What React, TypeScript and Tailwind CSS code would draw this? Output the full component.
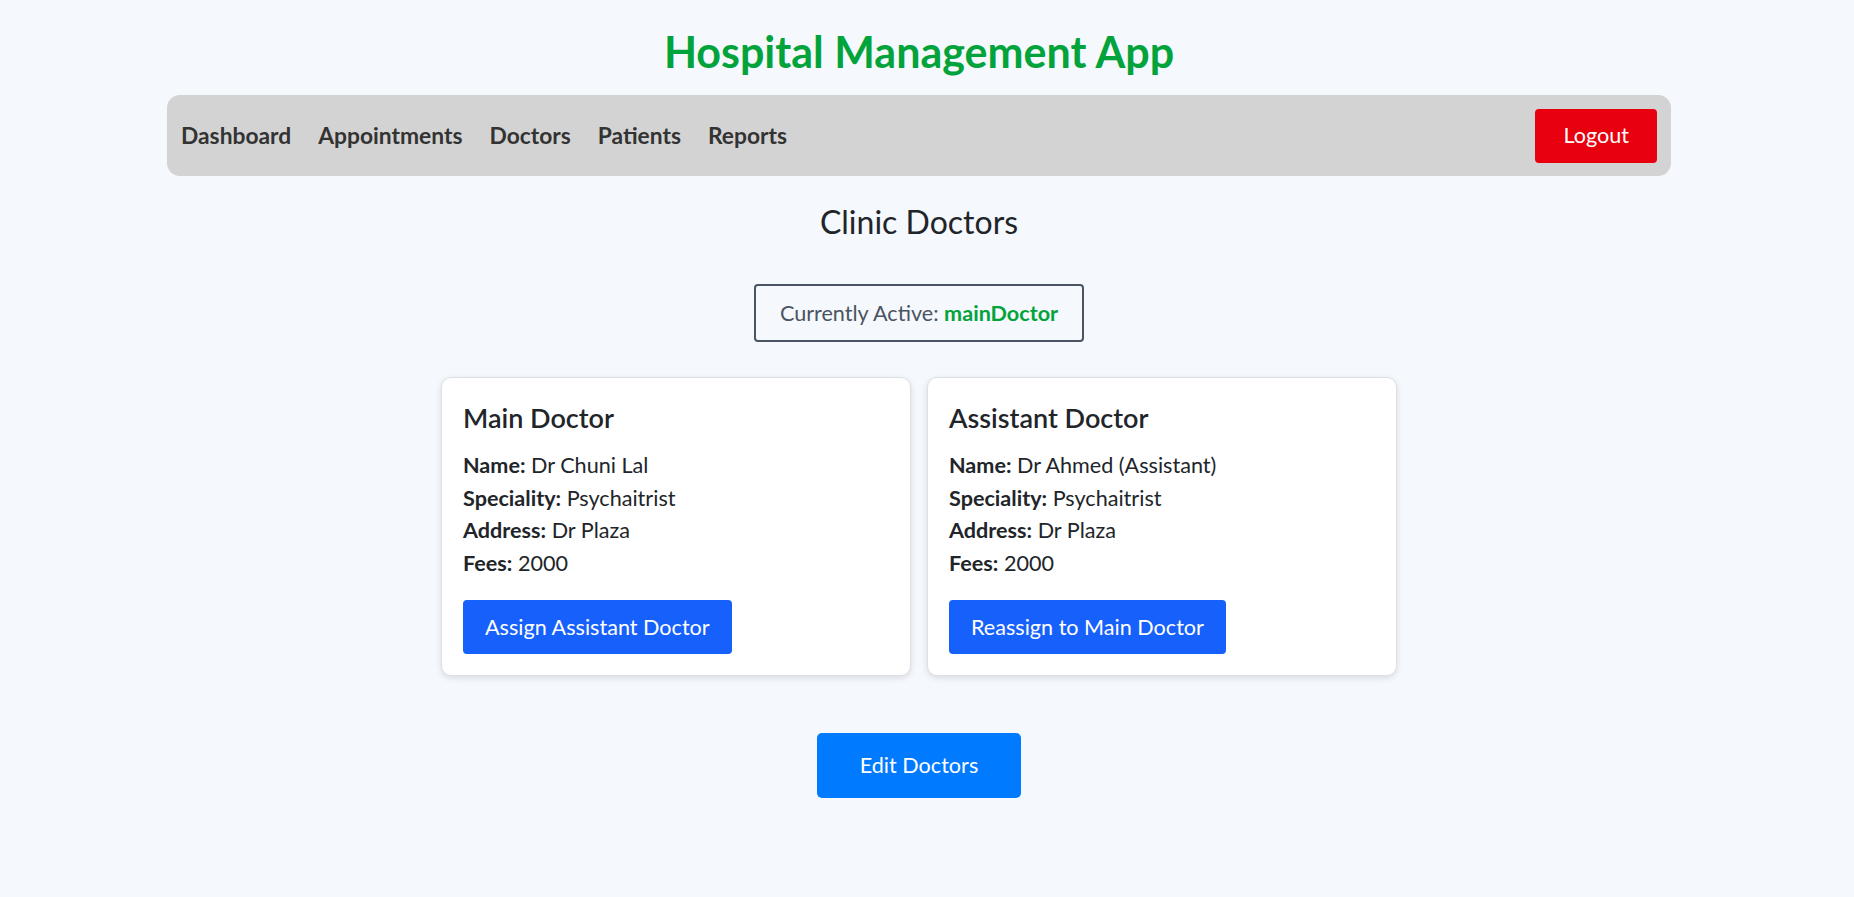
import React from "react";

const Field = ({ label, value }: { label: string; value: string }) => (
  <div className="leading-[32.4px]">
    <span className="font-bold">{label}:</span> {value}
  </div>
);

const DoctorCard = ({
  title,
  name,
  button,
}: {
  title: string;
  name: string;
  button: string;
}) => (
  <div className="w-[470px] rounded-[10px] border border-[#dcdfe3] bg-white p-[21px] shadow-[0_2px_6px_rgba(0,0,0,0.12)]">
    <h3 className="mt-[3px] text-[27px] font-semibold leading-[32px] text-[#212529]">{title}</h3>
    <div className="mt-[15px] text-[21.6px] text-[#212529]">
      <Field label="Name" value={name} />
      <Field label="Speciality" value="Psychaitrist" />
      <Field label="Address" value="Dr Plaza" />
      <Field label="Fees" value="2000" />
    </div>
    <button className="mt-[21px] rounded-[4px] bg-[#1660fc] px-[22px] py-[10.8px] text-[21.6px] leading-[32.4px] text-white">
      {button}
    </button>
  </div>
);

export default function App() {
  return (
    <div className="min-h-screen bg-[#f5f8fc] font-['Lato','Noto_Sans',sans-serif] text-[#212529]">
      <div className="w-[1838px] pb-10">
        <h1 className="pt-[26px] text-center text-[43px] font-bold leading-[52px] text-[#03a33c]">
          Hospital Management App
        </h1>
        <nav className="mx-[167px] mt-[17px] flex h-[81px] items-center justify-between rounded-[13px] bg-[#d3d3d3] px-[14px]">
          <div className="flex items-center gap-[27px] text-[22.8px] font-bold text-[#333333]">
            <span>Dashboard</span>
            <span>Appointments</span>
            <span>Doctors</span>
            <span>Patients</span>
            <span>Reports</span>
          </div>
          <button className="h-[54px] rounded-[4px] bg-[#e8000e] px-[28px] text-[21.6px] text-white">
            Logout
          </button>
        </nav>
        <h2 className="mt-[27px] text-center text-[32px] leading-[38.4px] text-[#212529]">Clinic Doctors</h2>
        <div className="mt-[43px] flex justify-center">
          <div className="rounded-[4px] border-2 border-[#4a5462] px-[23.5px] py-[10.8px] text-[21.6px] leading-[32.4px] text-[#4a5462]">
            Currently Active: <span className="font-bold text-[#03a33c]">mainDoctor</span>
          </div>
        </div>
        <div className="mt-[35px] flex justify-center gap-[16px]">
          <DoctorCard title="Main Doctor" name="Dr Chuni Lal" button="Assign Assistant Doctor" />
          <DoctorCard title="Assistant Doctor" name="Dr Ahmed (Assistant)" button="Reassign to Main Doctor" />
        </div>
        <div className="mt-[57px] flex justify-center">
          <button className="h-[65px] rounded-[5px] bg-[#007bff] px-[43px] text-[21.6px] text-white">
            Edit Doctors
          </button>
        </div>
      </div>
    </div>
  );
}
